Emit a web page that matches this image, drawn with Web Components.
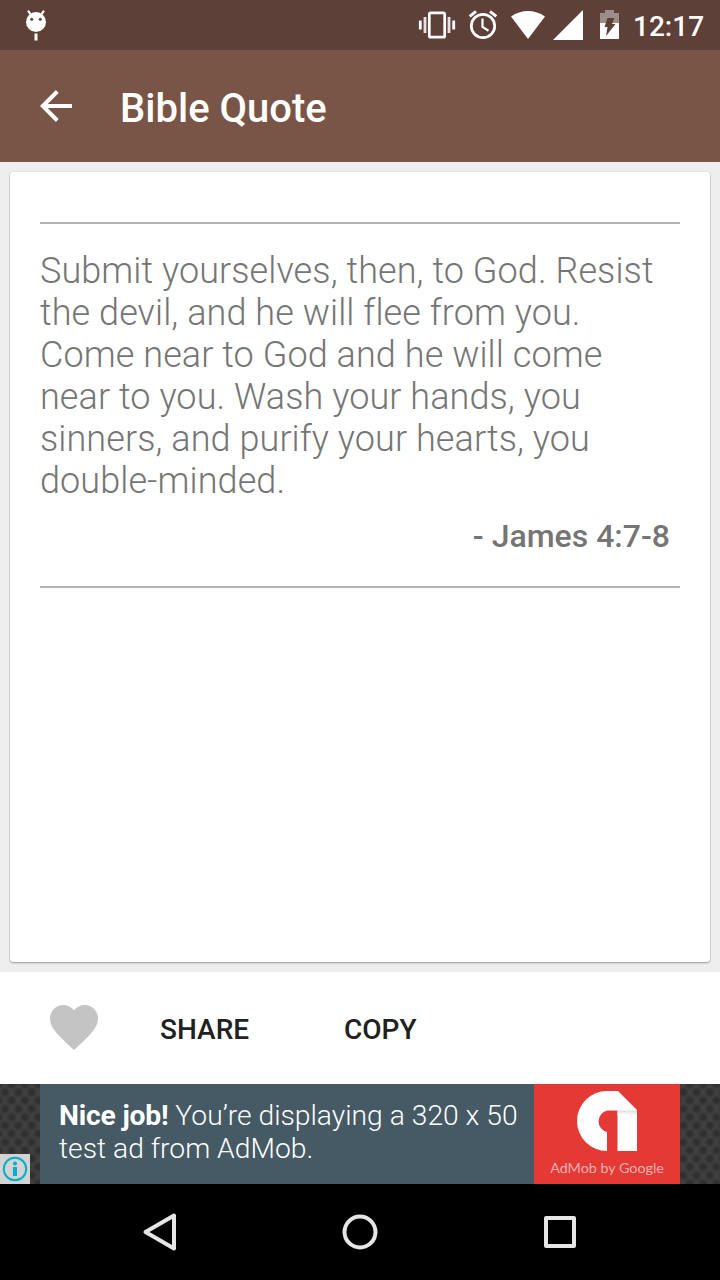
<!DOCTYPE html>
<html lang="en">
<head>
<meta charset="utf-8">
<title>Bible Quote</title>
<style>
    html, body {
        margin: 0;
        height: 100%;
    }
    body {
        font-family: Roboto, "Liberation Sans", sans-serif;
        overflow: hidden;
    }
</style>
</head>
<body>
<quote-app></quote-app>

<script>
class StatusBar extends HTMLElement {
    constructor() {
        super();
        this.attachShadow({ mode: 'open' });
        this.shadowRoot.innerHTML = `
            <style>
                :host {
                    display: flex;
                    height: 50px;
                    background: #5d4037;
                    color: white;
                }
                svg {
                    display: block;
                    flex: none;
                }
                .left {
                    flex: 1;
                }
                .clock {
                    width: 87px;
                    box-sizing: border-box;
                    font-size: 28px;
                    font-weight: 500;
                    line-height: 53px;
                    white-space: nowrap;
                }
            </style>
            <div class="left">
                <svg width="72" height="50" viewBox="0 0 72 50">
                    <circle cx="36" cy="22" r="10" fill="#fff"/>
                    <path d="M31 15L28.500 11.300M41 15L43.500 11.300" stroke="#fff" stroke-width="2.200" stroke-linecap="round"/>
                    <circle cx="31.700" cy="19.300" r="1.500" fill="#5d4037"/>
                    <circle cx="40.300" cy="19.300" r="1.500" fill="#5d4037"/>
                    <path d="M34.500 33.500h3v7h-3z" fill="#fff"/>
                </svg>
            </div>
            <svg width="221" height="50" viewBox="412 0 221 50" fill="none" stroke="#fff">
                <rect x="429.300" y="12.800" width="15.400" height="24.400" rx="1.500" stroke-width="2.700"/>
                <path d="M425 17v16M449 17v16" stroke-width="2.800" opacity=".85"/>
                <path d="M420.300 20.500v9M453.700 20.500v9" stroke-width="2.800"/>
                <circle cx="483" cy="26" r="11.700" stroke-width="2.700"/>
                <path d="M482.500 18.500v8.500l6 3.700" stroke-width="2.200"/>
                <path d="M469.700 16.300l6.300-5M496.300 16.300l-6.300-5" stroke-width="3"/>
                <path d="M511 16.500Q519 11 528 11T545 16.500L528 39z" fill="#fff" stroke="none"/>
                <path d="M553 40L583 10V40z" fill="#fff" stroke="none"/>
                <path d="M600 23V13h5v-3h9v3h5v10z" fill="#fff" opacity=".4" stroke="none"/>
                <path d="M600 23h19v16h-19z" fill="#fff" stroke="none"/>
                <path d="M607.500 18h7l-2.500 6h3.500l-9.500 12 1.500-9h-3z" fill="#5d4037" stroke="none"/>
            </svg>
            <div class="clock"><slot></slot></div>
        `;
    }
}
customElements.define('status-bar', StatusBar);

class AppToolbar extends HTMLElement {
    constructor() {
        super();
        this.attachShadow({ mode: 'open' });
        this.shadowRoot.innerHTML = `
            <style>
                :host {
                    display: flex;
                    align-items: center;
                    height: 112px;
                    padding: 0 40px;
                    box-sizing: border-box;
                    background: #795548;
                    color: white;
                }
                svg {
                    display: block;
                    margin-right: 48px;
                }
                .title {
                    font-size: 40px;
                    font-weight: 500;
                    line-height: 48px;
                    padding-top: 6px;
                }
            </style>
            <svg width="32" height="32" viewBox="0 0 32 32" fill="none" stroke="#fff" stroke-width="4">
                <path d="M32 16H3M17.300 1.500L2.800 16l14.500 14.500"/>
            </svg>
            <div class="title"><slot></slot></div>
        `;
    }
}
customElements.define('app-toolbar', AppToolbar);

class QuoteCard extends HTMLElement {
    constructor() {
        super();
        this.attachShadow({ mode: 'open' });
        this.shadowRoot.innerHTML = `
            <style>
                :host {
                    display: block;
                    flex: 1;
                    padding: 50px 30px;
                    box-sizing: border-box;
                    border-radius: 3px;
                    background: white;
                    box-shadow: 0 1px 2px rgba(0, 0, 0, .35), 0 0 1px rgba(0, 0, 0, .2);
                    color: #757575;
                }
                .quote {
                    height: 336px;
                    padding-top: 26px;
                    border-top: 2px solid #b3b3b3;
                    border-bottom: 2px solid #b3b3b3;
                }
                .text {
                    font-size: 36px;
                    font-weight: 300;
                    line-height: 42px;
                    letter-spacing: .08px;
                    white-space: nowrap;
                }
                .source {
                    padding: 15px 10px 0 0;
                    font-size: 32px;
                    font-weight: 500;
                    line-height: 38px;
                    text-align: right;
                }
            </style>
            <div class="quote">
                <div class="text"><slot></slot></div>
                <div class="source"><slot name="source"></slot></div>
            </div>
        `;
    }
}
customElements.define('quote-card', QuoteCard);

class ActionBar extends HTMLElement {
    constructor() {
        super();
        this.attachShadow({ mode: 'open' });
        this.shadowRoot.innerHTML = `
            <style>
                :host {
                    display: flex;
                    align-items: center;
                    height: 112px;
                    padding-left: 50px;
                    box-sizing: border-box;
                    background: white;
                    color: #212121;
                }
                svg {
                    display: block;
                    margin: 0 62px 2px 0;
                }
                .buttons {
                    display: grid;
                    grid-template-columns: 184px 184px;
                    font-size: 28px;
                    font-weight: 500;
                    line-height: 34px;
                    padding-top: 3px;
                }
            </style>
            <svg width="48" height="45" viewBox="2 3 20 18.350" preserveAspectRatio="none">
                <path fill="#c4c4c4" d="M12 21.350l-1.450-1.320C5.400 15.360 2 12.280 2 8.500 2 5.420 4.420 3 7.500 3c1.740 0 3.410.810 4.500 2.090C13.090 3.810 14.760 3 16.500 3 19.580 3 22 5.420 22 8.500c0 3.780-3.400 6.860-8.550 11.540L12 21.350z"/>
            </svg>
            <div class="buttons"><slot></slot></div>
        `;
    }
}
customElements.define('action-bar', ActionBar);

class AdBanner extends HTMLElement {
    constructor() {
        super();
        this.attachShadow({ mode: 'open' });
        this.shadowRoot.innerHTML = `
            <style>
                :host {
                    display: flex;
                    position: relative;
                    height: 100px;
                    padding: 0 40px;
                    box-sizing: border-box;
                    background-color: #404040;
                    background-image:
                        radial-gradient(circle at 50% 50%, #2f2f2f 0 2px, transparent 5.5px),
                        radial-gradient(circle at 50% 50%, #2f2f2f 0 2px, transparent 5.5px);
                    background-size: 13.300px 16.600px;
                    background-position: -1.500px 0, 5px 8.300px;
                }
                .message {
                    width: 494px;
                    padding: 15px 0 0 19px;
                    box-sizing: border-box;
                    background: #455a64;
                    color: white;
                    font-size: 28.250px;
                    font-weight: 300;
                    line-height: 33px;
                    white-space: nowrap;
                }
                ::slotted(b) {
                    letter-spacing: -.2px;
                }
                .brand {
                    display: flex;
                    flex-direction: column;
                    align-items: center;
                    width: 146px;
                    background: #e53935;
                    color: #f5b0ae;
                    font-family: Lato, sans-serif;
                    font-size: 14.300px;
                    line-height: 18px;
                    white-space: nowrap;
                }
                .brand svg {
                    display: block;
                    margin: 7px 0 8px;
                }
                .info {
                    position: absolute;
                    left: 0;
                    bottom: 0;
                    display: block;
                }
            </style>
            <svg class="info" width="30" height="30" viewBox="0 0 30 30">
                <path d="M0 0h30v30H0z" fill="#d3d3d3"/>
                <circle cx="15" cy="15" r="11.200" fill="none" stroke="#00aecd" stroke-width="2"/>
                <circle cx="15" cy="9.500" r="2" fill="#00aecd"/>
                <path d="M13 13h4v9h-4z" fill="#00aecd"/>
            </svg>
            <div class="message"><slot></slot></div>
            <div class="brand">
                <svg width="60" height="60" viewBox="0 0 60 60">
                    <defs>
                        <linearGradient id="fold" x1="0" y1="0" x2="0" y2="1">
                            <stop offset="0" stop-color="#dcdcdc"/>
                            <stop offset="1" stop-color="#fff"/>
                        </linearGradient>
                    </defs>
                    <path fill="#fff" d="M30 0H41L60 19V60H40.500V19.500H30.500A11 11 0 0 0 30 41V60A30 30 0 0 1 30 0z"/>
                    <path fill="url(#fold)" d="M40.500 19.500H60V24H40.500z"/>
                </svg>
                <span><slot name="brand"></slot></span>
            </div>
        `;
    }
}
customElements.define('ad-banner', AdBanner);

class NavBar extends HTMLElement {
    constructor() {
        super();
        this.attachShadow({ mode: 'open' });
        this.shadowRoot.innerHTML = `
            <style>
                :host {
                    display: flex;
                    justify-content: center;
                    align-items: center;
                    gap: 160px;
                    height: 96px;
                    background: black;
                }
                svg {
                    display: block;
                    fill: none;
                    stroke: #e6e6e6;
                    stroke-width: 4;
                    stroke-linejoin: round;
                }
            </style>
            <svg width="40" height="40" viewBox="0 0 40 40"><path d="M34 3.500V36.500L5.500 20z"/></svg>
            <svg width="40" height="40" viewBox="0 0 40 40"><circle cx="20" cy="20" r="15.500"/></svg>
            <svg width="40" height="40" viewBox="0 0 40 40"><rect x="6" y="6" width="28" height="28"/></svg>
        `;
    }
}
customElements.define('nav-bar', NavBar);

class QuoteApp extends HTMLElement {
    constructor() {
        super();
        this.attachShadow({ mode: 'open' });
        this.shadowRoot.innerHTML = `
            <style>
                :host {
                    display: flex;
                    flex-direction: column;
                    height: 1280px;
                    background: #eee;
                }
                main {
                    display: flex;
                    flex: 1;
                    padding: 10px;
                }
                b {
                    font-weight: 700;
                }
            </style>
            <status-bar>12:17</status-bar>
            <app-toolbar>Bible Quote</app-toolbar>
            <main>
                <quote-card>
                    Submit yourselves, then, to God. Resist<br>
                    the devil, and he will flee from you.<br>
                    Come near to God and he will come<br>
                    near to you. Wash your hands, you<br>
                    sinners, and purify your hearts, you<br>
                    double-minded.
                    <span slot="source">- James 4:7-8</span>
                </quote-card>
            </main>
            <action-bar>
                <span>SHARE</span>
                <span>COPY</span>
            </action-bar>
            <ad-banner>
                <b>Nice job!</b> You’re displaying a 320 x 50<br>test ad from AdMob.
                <span slot="brand">AdMob by Google</span>
            </ad-banner>
            <nav-bar></nav-bar>
        `;
    }
}
customElements.define('quote-app', QuoteApp);
</script>
</body>
</html>
